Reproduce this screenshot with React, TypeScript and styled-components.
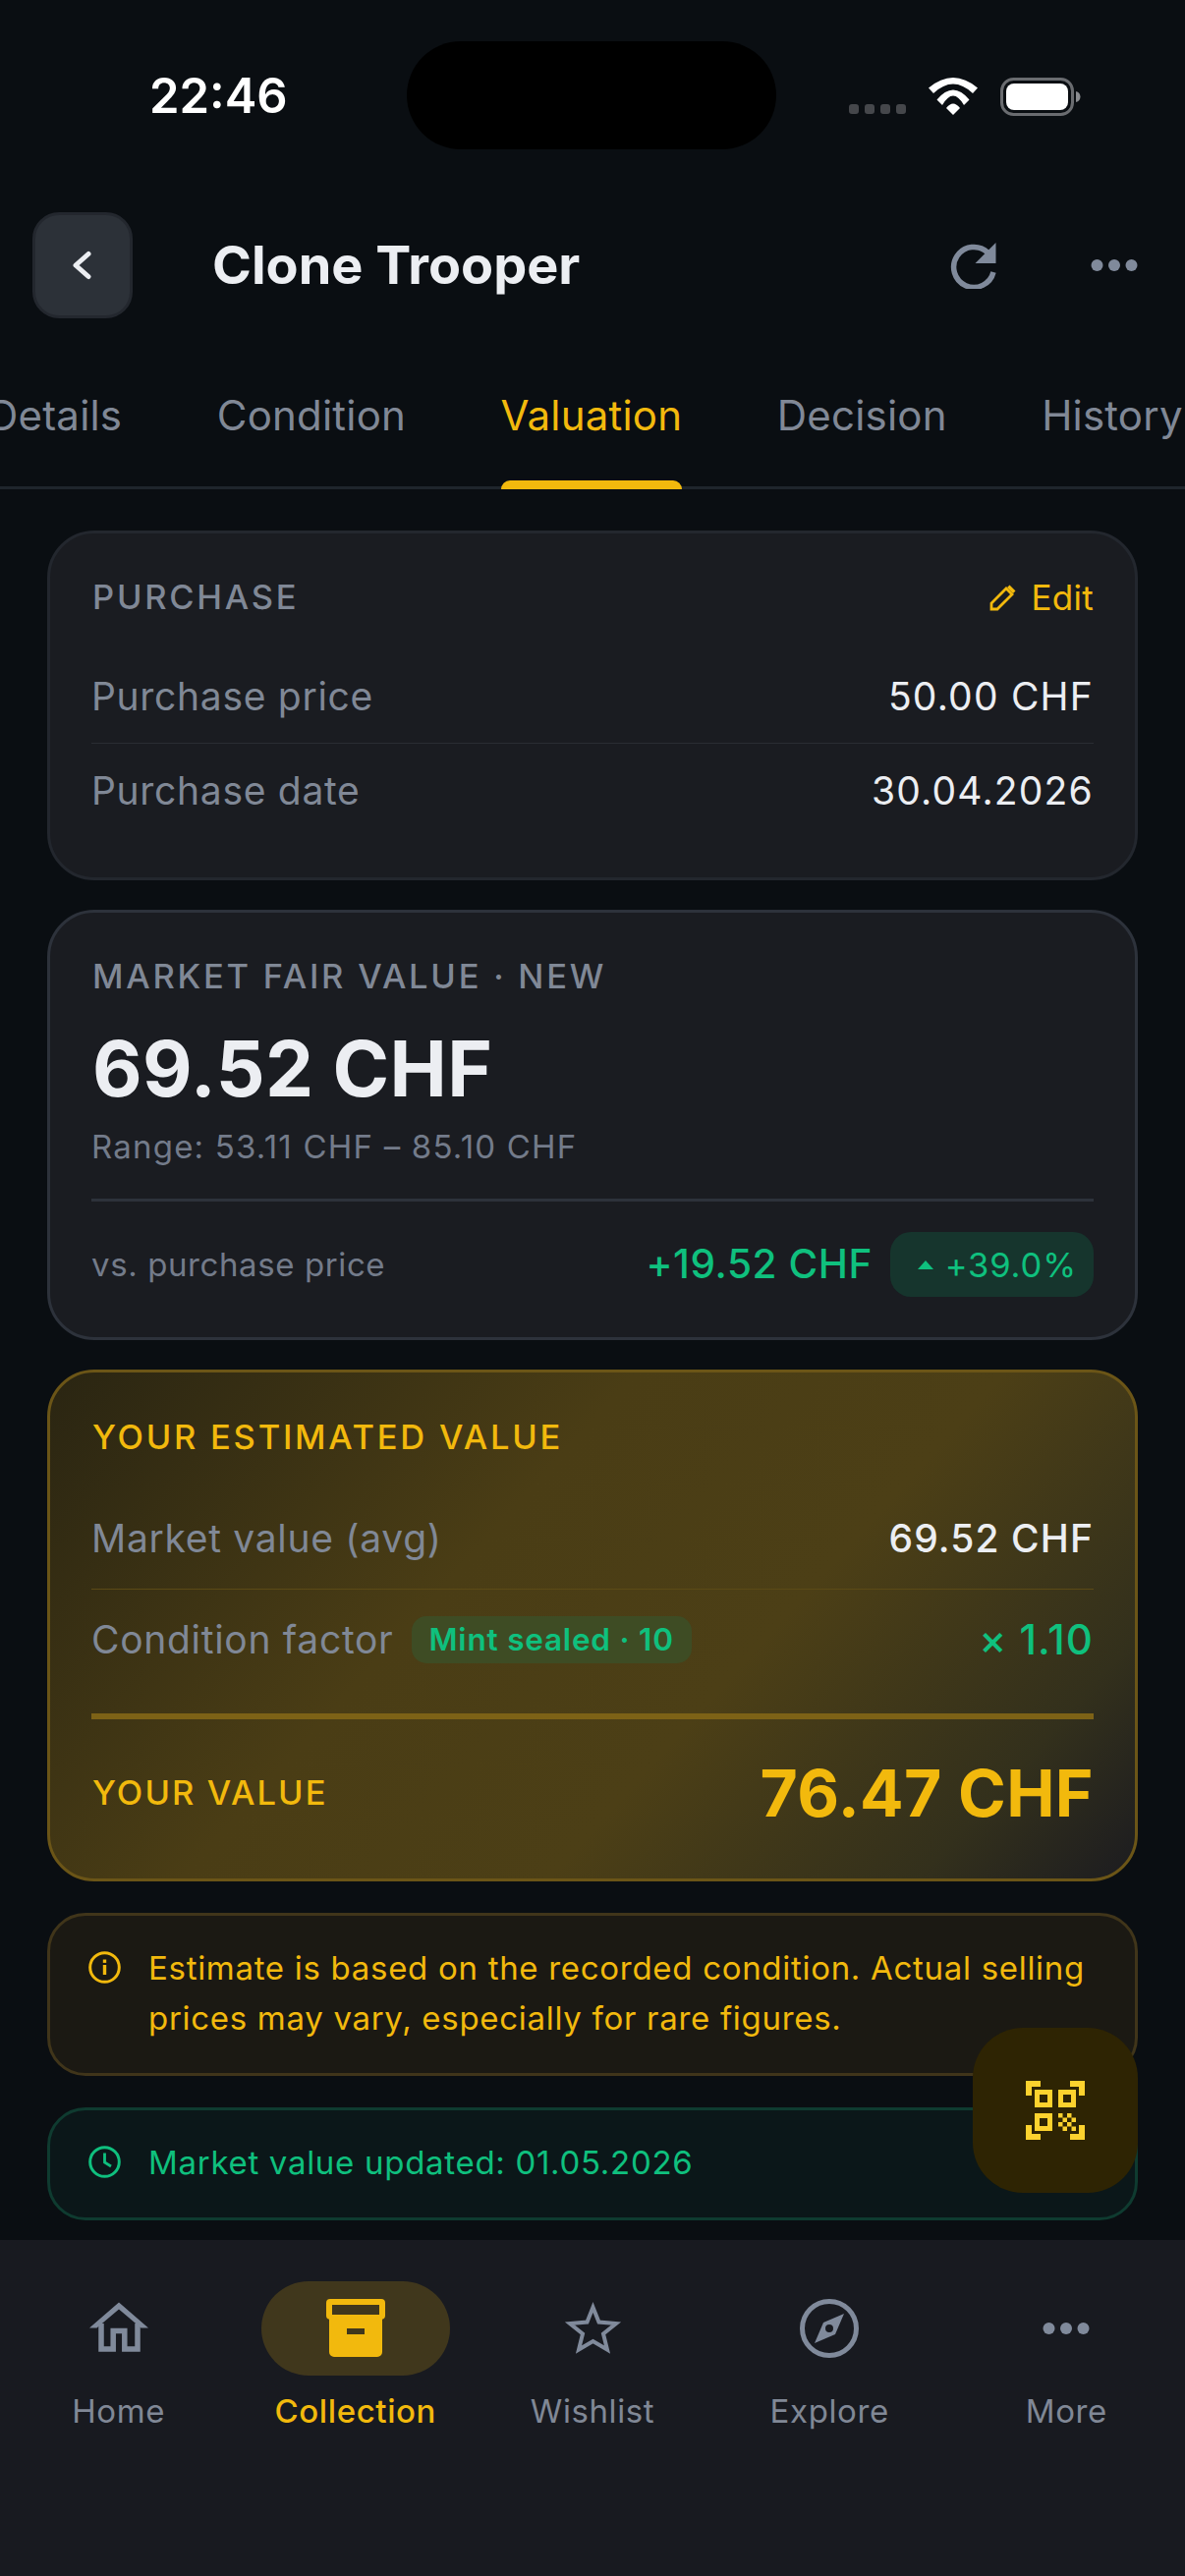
import styled, { createGlobalStyle } from "styled-components";

const GlobalStyle = createGlobalStyle`
  html, body {
    margin: 0;
    padding: 0;
    background: #0a0e12;
  }
  * {
    box-sizing: border-box;
  }
`;

const Screen = styled.div`
  position: relative;
  width: 1206px;
  height: 2622px;
  display: flex;
  flex-direction: column;
  overflow: hidden;
  background: #0a0e12;
  font-family: Inter, "Noto Sans", sans-serif;
  color: #eceef2;
`;

/* status bar */
const StatusBar = styled.div`
  flex: none;
  height: 216px;
  padding: 66px 106px 0 152px;
  display: flex;
  justify-content: space-between;
  align-items: flex-start;
`;
const Clock = styled.span`
  font-size: 49px;
  line-height: 64px;
  font-weight: 600;
  color: #fff;
`;
const Island = styled.div`
  position: absolute;
  left: 414px;
  top: 42px;
  width: 376px;
  height: 110px;
  border-radius: 55px;
  background: #000;
`;
const StatusIcons = styled.div`
  display: flex;
  align-items: flex-start;
  padding-top: 13px;
  gap: 23px;
`;
const SignalDots = styled.div`
  display: flex;
  gap: 6px;
  margin-top: 27px;
`;
const SignalDot = styled.i`
  width: 10px;
  height: 10px;
  border-radius: 3px;
  background: #45474b;
`;

/* header */
const Header = styled.div`
  flex: none;
  height: 108px;
  padding: 0 48px 0 33px;
  display: flex;
  align-items: center;
`;
const BackButton = styled.button`
  width: 102px;
  height: 108px;
  padding: 0;
  border: 3px solid #23272e;
  border-radius: 27px;
  background: #2c3138;
  color: #eceef2;
  display: flex;
  align-items: center;
  justify-content: center;
`;
const Title = styled.h1`
  flex: 1;
  margin: 0 0 0 81px;
  font-size: 54px;
  line-height: 72px;
  font-weight: 700;
  color: #eceef2;
`;
const HeaderActions = styled.div`
  display: flex;
  align-items: center;
  gap: 96px;
`;

/* tabs */
const TabStrip = styled.div`
  flex: none;
  height: 174px;
  padding: 71px 0 0 0;
  border-bottom: 3px solid #1f252c;
  display: flex;
  gap: 96.5px;
  margin-left: -12px;
  width: 1400px;
`;
const Tab = styled.div<{ $active?: boolean }>`
  position: relative;
  height: 100px;
  font-size: 42px;
  line-height: 56px;
  font-weight: 400;
  color: ${(p) => (p.$active ? "#f2b90d" : "#808896")};
  letter-spacing: 0.2px;

  ${(p) =>
    p.$active &&
    `
    &::after {
      content: "";
      position: absolute;
      left: 0;
      right: 0;
      bottom: -3px;
      height: 9px;
      border-radius: 9px 9px 0 0;
      background: #f2b90d;
    }
  `}
`;

/* scroll content */
const Content = styled.div`
  flex: 1;
  min-height: 0;
  padding: 42px 48px 0;
  display: flex;
  flex-direction: column;
  gap: 30px;
`;
const Card = styled.section<{ $strong?: boolean }>`
  border: 3px solid ${(p) => (p.$strong ? "#2d323b" : "#23272e")};
  border-radius: 48px;
  background: #1a1c21;
  padding: 43px 42px 41px;
`;
const CardHead = styled.div`
  display: flex;
  justify-content: space-between;
  align-items: center;
  margin-bottom: 31px;
`;
const Eyebrow = styled.div<{ $gold?: boolean; $tight?: boolean }>`
  padding-left: 1px;
  font-size: 34.5px;
  line-height: 44px;
  font-weight: 500;
  letter-spacing: ${(p) => (p.$tight ? "2.1px" : "2.75px")};
  color: ${(p) => (p.$gold ? "#f2b90d" : "#808896")};
`;
const EditLink = styled.div`
  display: flex;
  align-items: center;
  gap: 14px;
  font-size: 35px;
  line-height: 44px;
  font-weight: 400;
  letter-spacing: 0.3px;
  color: #f2b90d;
`;
const Row = styled.div<{ $line?: boolean; $height: number; $gold?: boolean }>`
  height: ${(p) => p.$height}px;
  display: flex;
  align-items: center;
  justify-content: space-between;
  border-bottom: ${(p) => (p.$line ? `1.5px solid ${p.$gold ? "#5c4a16" : "#2a2d33"}` : "none")};
`;
const RowLabel = styled.span`
  display: flex;
  align-items: center;
  gap: 18px;
  font-size: 39px;
  line-height: 52px;
  font-weight: 400;
  color: #808896;
  letter-spacing: 0.7px;
`;
const RowValue = styled.span<{ $green?: boolean; $medium?: boolean }>`
  font-size: ${(p) => (p.$green ? 42 : 39)}px;
  line-height: 52px;
  font-weight: ${(p) => (p.$medium ? 500 : 400)};
  letter-spacing: ${(p) => (p.$medium ? 1.1 : 1.2)}px;
  color: ${(p) => (p.$green ? "#0fc07e" : "#eceef2")};
`;

const BigValue = styled.div`
  margin-top: 27px;
  padding-left: 1px;
  font-size: 78px;
  line-height: 90px;
  font-weight: 700;
  letter-spacing: 0.4px;
  color: #eceef2;
`;
const RangeText = styled.div`
  margin-top: 12px;
  font-size: 33px;
  line-height: 44px;
  color: #737b8a;
  letter-spacing: 1.2px;
`;
const CompareRow = styled.div`
  margin-top: 31px;
  padding-top: 31px;
  border-top: 3px solid #2d323b;
  display: flex;
  justify-content: space-between;
  align-items: center;
`;
const CompareLabel = styled.span`
  font-size: 33px;
  line-height: 44px;
  color: #737b8a;
  letter-spacing: 0.6px;
`;
const CompareRight = styled.div`
  display: flex;
  align-items: center;
  gap: 18px;
`;
const Delta = styled.span`
  font-size: 40.5px;
  line-height: 52px;
  font-weight: 500;
  letter-spacing: 0.6px;
  color: #0fc07e;
`;
const DeltaPill = styled.span`
  height: 66px;
  width: 207px;
  padding-right: 17px;
  display: flex;
  align-items: center;
  justify-content: flex-end;
  gap: 12px;
  border-radius: 21px;
  background: #16352d;
  font-size: 34.5px;
  font-weight: 400;
  color: #0fc07e;
  letter-spacing: 0.9px;
`;

const EstimateCard = styled.section`
  border: 3px solid #6b5517;
  border-radius: 48px;
  background: linear-gradient(132deg, #2a2512 0%, #4a3d15 38%, #4c3f16 62%, #33301c 86%, #1c1c20 100%);
  padding: 44px 42px 37px;
`;
const EstimateRows = styled.div`
  margin-top: 29px;
`;
const ConditionBadge = styled.span`
  height: 48px;
  padding: 0 18px;
  display: inline-flex;
  align-items: center;
  border-radius: 15px;
  background: #3e4c24;
  font-size: 31.5px;
  font-weight: 600;
  color: #0fc07e;
  letter-spacing: 0.8px;
`;
const ThickRule = styled.div`
  height: 6px;
  margin: 24px 0 25px;
  background: #7d6216;
`;
const YourValue = styled.span`
  font-size: 66px;
  line-height: 80px;
  font-weight: 700;
  letter-spacing: 0.4px;
  color: #f2b90d;
`;

const Note = styled.div<{ $tone: "gold" | "green" }>`
  margin-top: 2px;
  border: 3px solid ${(p) => (p.$tone === "gold" ? "#40351a" : "#0f3b30")};
  border-radius: 39px;
  background: ${(p) => (p.$tone === "gold" ? "#1b1913" : "#0b1719")};
  padding: 28px 39px 30px;
  display: flex;
  align-items: flex-start;
  gap: 28px;
  font-size: 33px;
  line-height: 51px;
  letter-spacing: 0.7px;
  color: ${(p) => (p.$tone === "gold" ? "#f2b90d" : "#0fc07e")};
`;
const NoteIcon = styled.span`
  flex: none;
  width: 33px;
  height: 33px;
  margin-top: 4px;
  display: block;
`;

const ScanButton = styled.button`
  position: absolute;
  left: 990px;
  top: 2064px;
  width: 168px;
  height: 168px;
  padding: 0;
  border: 0;
  border-radius: 51px;
  background: #2e2403;
  display: flex;
  align-items: center;
  justify-content: center;
`;

/* bottom nav */
const BottomNav = styled.nav`
  flex: none;
  height: 342px;
  background: #181a20;
  padding-top: 42px;
  display: grid;
  grid-template-columns: repeat(5, 1fr);
  align-items: start;
`;
const NavItem = styled.div<{ $active?: boolean }>`
  display: flex;
  flex-direction: column;
  align-items: center;
  font-size: 33px;
  line-height: 44px;
  font-weight: ${(p) => (p.$active ? 500 : 400)};
  color: ${(p) => (p.$active ? "#f2b90d" : "#808896")};
  letter-spacing: 0.6px;
`;
const NavIconWrap = styled.div<{ $active?: boolean }>`
  width: 192px;
  height: 96px;
  margin-bottom: 14px;
  border-radius: 48px;
  display: flex;
  align-items: center;
  justify-content: center;
  background: ${(p) => (p.$active ? "#40371c" : "transparent")};
`;

const Wifi = () => (
  <svg width="50" height="38" viewBox="0 0 50 38">
    <path d="M0 10.500Q25-10.500 50 10.500L45 16Q25-3 5 16Z" fill="#fff" />
    <path d="M8.500 22.500Q25 2.500 41.500 22.500L36 28Q25 9 14 28Z" fill="#fff" />
    <path d="M18 31Q25 22 32 31L25 38Z" fill="#fff" />
  </svg>
);

const Battery = () => (
  <svg width="82" height="39" viewBox="0 0 82 39">
    <rect x="1.500" y="1.500" width="72" height="36" rx="12" fill="none" stroke="#6a6c70" strokeWidth="3" />
    <rect x="6" y="6" width="63" height="27" rx="8" fill="#fff" />
    <path d="M77 14c3 .8 4.500 3 4.500 5.500S80 24.200 77 25z" fill="#8a8c90" />
  </svg>
);

const Chevron = () => (
  <svg width="24" height="30" viewBox="0 0 24 30">
    <path d="M18 3.500L5 15l13 11.500" fill="none" stroke="#eceef2" strokeWidth="5" strokeLinecap="round" strokeLinejoin="round" />
  </svg>
);

const Refresh = () => (
  <svg width="48" height="48" viewBox="0 0 48 48">
    <path d="M45 31a20.500 20.500 0 1 1-5.800-20" fill="none" stroke="#808a9b" strokeWidth="5.500" />
    <path d="M47.500 1v21h-21z" fill="#808a9b" />
  </svg>
);

const Dots = () => (
  <svg width="48" height="14" viewBox="0 0 48 14">
    <circle cx="6.500" cy="7" r="6" fill="#808a9b" />
    <circle cx="24" cy="7" r="6" fill="#808a9b" />
    <circle cx="41.500" cy="7" r="6" fill="#808a9b" />
  </svg>
);

const Pencil = () => (
  <svg width="28" height="28" viewBox="0 0 28 28">
    <path d="M2 26v-6L17 5l6 6L8 26z" fill="none" stroke="#f2b90d" strokeWidth="2.800" />
    <path d="M20.500 1.500l6 6-2.500 2.500-6-6z" fill="#f2b90d" />
  </svg>
);

const Caret = () => (
  <svg width="16" height="9" viewBox="0 0 16 9">
    <path d="M8 0l8 9H0z" fill="#0fc07e" />
  </svg>
);

const InfoIcon = () => (
  <svg width="33" height="33" viewBox="0 0 33 33">
    <circle cx="16.500" cy="16.500" r="14.800" fill="none" stroke="#f2b90d" strokeWidth="3" />
    <rect x="14.800" y="14" width="3.400" height="10" fill="#f2b90d" />
    <rect x="14.800" y="8.500" width="3.400" height="3.400" fill="#f2b90d" />
  </svg>
);

const ClockIcon = () => (
  <svg width="33" height="33" viewBox="0 0 33 33">
    <circle cx="16.500" cy="16.500" r="14.800" fill="none" stroke="#0fc07e" strokeWidth="3" />
    <path d="M16.500 7.500v9.500l6.500 4" fill="none" stroke="#0fc07e" strokeWidth="2.800" />
  </svg>
);

const QrIcon = () => (
  <svg width="60" height="60" viewBox="0 0 60 60" fill="#fcd22e">
    <path d="M0 0h15v6H6v9H0zM45 0h15v15h-6V6h-9zM0 45h6v9h9v6H0zM54 45h6v15H45v-6h9z" />
    <path fillRule="evenodd" d="M9 9h18v18H9zm5 5v8h8v-8zM33 9h18v18H33zm5 5v8h8v-8zM9 33h18v18H9zm5 5v8h8v-8z" />
    <path d="M33 33h4.500v4.500H33zM42 33h4.500v4.500H42zM37.500 37.500H42V42h-4.500zM46.500 37.500H51V42h-4.500zM33 42h4.500v4.500H33zM42 42h4.500v4.500H42zM37.500 46.500H42V51h-4.500zM46.500 46.500H51V51h-4.500z" />
  </svg>
);

const HomeIcon = () => (
  <svg width="60" height="60" viewBox="0 0 60 60">
    <path d="M30 3.500L60 29.500H52.500L30 10.500 7.500 29.500H0Z" fill="#808a9b" />
    <path d="M12 25V51H24.200V32.500H35.800V51H49V25" fill="none" stroke="#808a9b" strokeWidth="5.500" />
  </svg>
);

const ArchiveIcon = () => (
  <svg width="60" height="60" viewBox="0 0 60 60">
    <path d="M4 0h52a4 4 0 0 1 4 4v13a4 4 0 0 1-3 3.800V54a5 5 0 0 1-5 5H8a5 5 0 0 1-5-5V20.800A4 4 0 0 1 0 17V4a4 4 0 0 1 4-4zm2 6v10h48V6zM21 30v6h18v-6z" fill="#f2b90d" fillRule="evenodd" />
  </svg>
);

const StarIcon = () => (
  <svg width="60" height="60" viewBox="0 0 60 60">
    <path d="M30.500 8.500L36.500 23.500 54 25 41 35.500 45 51.500 30.500 43 16 51.500 20 35.500 7 25 24.500 23.500Z" fill="none" stroke="#808a9b" strokeWidth="4" strokeMiterlimit="10" />
  </svg>
);

const CompassIcon = () => (
  <svg width="60" height="60" viewBox="0 0 60 60">
    <circle cx="30" cy="30" r="27.500" fill="none" stroke="#808a9b" strokeWidth="5" />
    <path fillRule="evenodd" d="M45 15L36 36 15 45 24 24zM30 26a4 4 0 1 0 0 8 4 4 0 0 0 0-8z" fill="#808a9b" />
  </svg>
);

const tabs = ["Details", "Condition", "Valuation", "Decision", "History"];

const navItems = [
  { label: "Home", icon: <HomeIcon /> },
  { label: "Collection", icon: <ArchiveIcon />, active: true },
  { label: "Wishlist", icon: <StarIcon /> },
  { label: "Explore", icon: <CompassIcon /> },
  { label: "More", icon: <Dots /> },
];

export default function App() {
  return (
    <Screen>
      <GlobalStyle />
      <StatusBar>
        <Clock>22:46</Clock>
        <StatusIcons>
          <SignalDots>
            <SignalDot />
            <SignalDot />
            <SignalDot />
            <SignalDot />
          </SignalDots>
          <Wifi />
          <Battery />
        </StatusIcons>
      </StatusBar>
      <Island />

      <Header>
        <BackButton>
          <Chevron />
        </BackButton>
        <Title>Clone Trooper</Title>
        <HeaderActions>
          <Refresh />
          <Dots />
        </HeaderActions>
      </Header>

      <TabStrip>
        {tabs.map((tab) => (
          <Tab key={tab} $active={tab === "Valuation"}>
            {tab}
          </Tab>
        ))}
      </TabStrip>

      <Content>
        <Card>
          <CardHead>
            <Eyebrow>PURCHASE</Eyebrow>
            <EditLink>
              <Pencil />
              Edit
            </EditLink>
          </CardHead>
          <Row $height={96} $line>
            <RowLabel>Purchase price</RowLabel>
            <RowValue>50.00 CHF</RowValue>
          </Row>
          <Row $height={95}>
            <RowLabel>Purchase date</RowLabel>
            <RowValue>30.04.2026</RowValue>
          </Row>
        </Card>

        <Card $strong>
          <Eyebrow>MARKET FAIR VALUE · NEW</Eyebrow>
          <BigValue>69.52 CHF</BigValue>
          <RangeText>Range: 53.11 CHF – 85.10 CHF</RangeText>
          <CompareRow>
            <CompareLabel>vs. purchase price</CompareLabel>
            <CompareRight>
              <Delta>+19.52 CHF</Delta>
              <DeltaPill>
                <Caret />
                +39.0%
              </DeltaPill>
            </CompareRight>
          </CompareRow>
        </Card>

        <EstimateCard>
          <Eyebrow $gold>YOUR ESTIMATED VALUE</Eyebrow>
          <EstimateRows>
            <Row $height={104} $line $gold>
              <RowLabel>Market value (avg)</RowLabel>
              <RowValue $medium>69.52 CHF</RowValue>
            </Row>
            <Row $height={102}>
              <RowLabel>
                Condition factor
                <ConditionBadge>Mint sealed · 10</ConditionBadge>
              </RowLabel>
              <RowValue $green $medium>× 1.10</RowValue>
            </Row>
          </EstimateRows>
          <ThickRule />
          <Row $height={100}>
            <Eyebrow $gold $tight>YOUR VALUE</Eyebrow>
            <YourValue>76.47 CHF</YourValue>
          </Row>
        </EstimateCard>

        <Note $tone="gold">
          <NoteIcon>
            <InfoIcon />
          </NoteIcon>
          <span>
            Estimate is based on the recorded condition. Actual selling
            <br />
            prices may vary, especially for rare figures.
          </span>
        </Note>

        <Note $tone="green">
          <NoteIcon>
            <ClockIcon />
          </NoteIcon>
          <span>Market value updated: 01.05.2026</span>
        </Note>
      </Content>

      <ScanButton>
        <QrIcon />
      </ScanButton>

      <BottomNav>
        {navItems.map((item) => (
          <NavItem key={item.label} $active={item.active}>
            <NavIconWrap $active={item.active}>{item.icon}</NavIconWrap>
            {item.label}
          </NavItem>
        ))}
      </BottomNav>
    </Screen>
  );
}
